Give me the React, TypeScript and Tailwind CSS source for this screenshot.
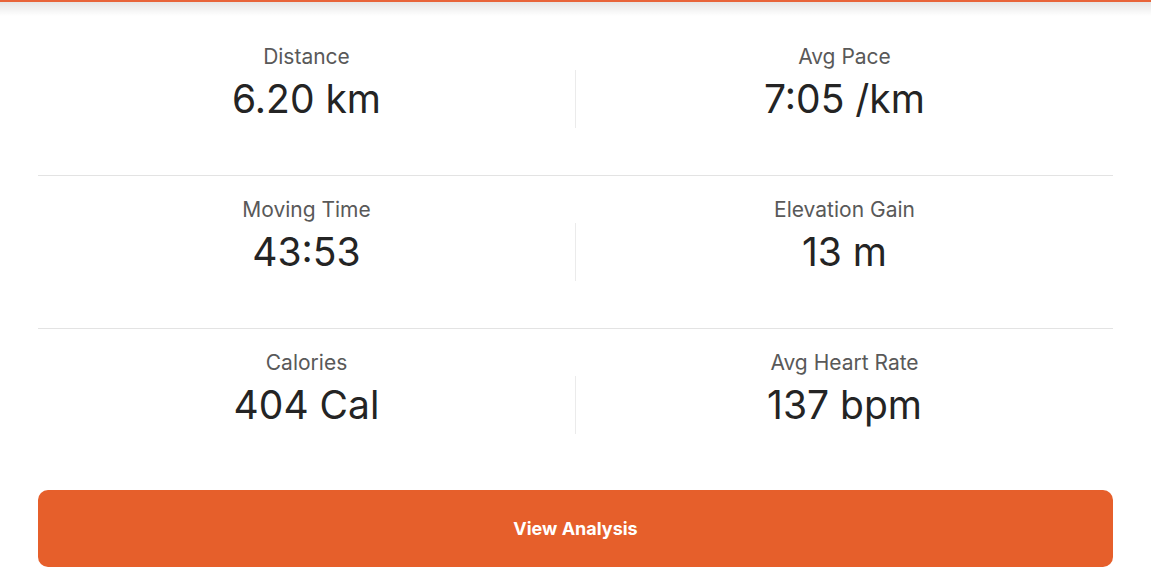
const stats = [
  [
    { label: 'Distance', value: '6.20 km' },
    { label: 'Avg Pace', value: '7:05 /km' },
  ],
  [
    { label: 'Moving Time', value: '43:53' },
    { label: 'Elevation Gain', value: '13 m' },
  ],
  [
    { label: 'Calories', value: '404 Cal' },
    { label: 'Avg Heart Rate', value: '137 bpm' },
  ],
]

function Stat({ label, value }: { label: string; value: string }) {
  return (
    <div className="flex flex-1 flex-col items-center gap-2">
      <span className="text-[21px] leading-[24px] text-[#595959]">{label}</span>
      <span className="text-[39px] leading-[44px] text-[#242424]">{value}</span>
    </div>
  )
}

export default function App() {
  return (
    <div
      className="relative h-[575px] w-full overflow-hidden bg-white"
      style={{ fontFamily: 'Inter, "Noto Sans", sans-serif' }}
    >
      <div className="absolute inset-x-0 top-0 h-[2px] bg-[#e8653b]" />
      <div className="absolute inset-x-0 top-[2px] h-[14px] bg-gradient-to-b from-black/10 to-transparent" />

      <div className="mx-[38px] pt-[23px]">
        {stats.map((row, i) => (
          <div
            key={i}
            className={
              i < stats.length - 1
                ? 'flex items-end border-b border-[#e3e3e3] pt-[22px] pb-[54px]'
                : 'flex items-end pt-[22px] pb-[54px]'
            }
          >
            <Stat {...row[0]} />
            <div className="mb-[-7px] h-[58px] w-px bg-[#ebebeb]" />
            <Stat {...row[1]} />
          </div>
        ))}

        <button className="mt-[9px] flex h-[77px] w-full items-center justify-center rounded-[10px] bg-[#e65f2b] text-[18px] font-bold text-white">
          View Analysis
        </button>
      </div>
    </div>
  )
}
